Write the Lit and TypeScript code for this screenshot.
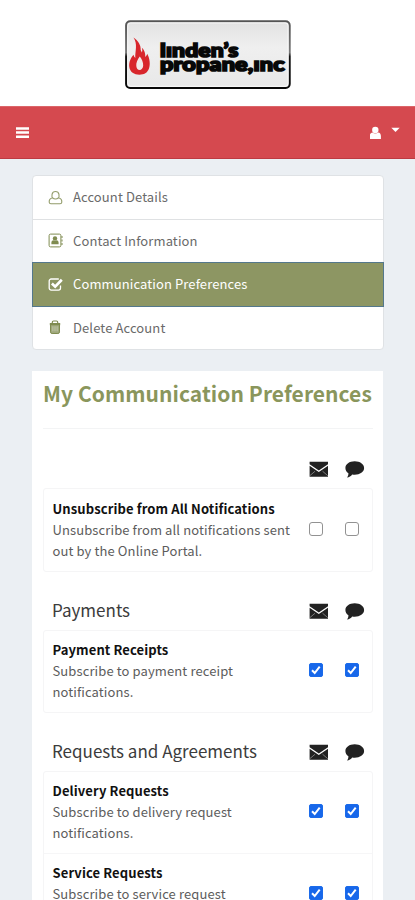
import { LitElement, html, svg, css, nothing } from "lit";
import { customElement, property } from "lit/decorators.js";
import { classMap } from "lit/directives/class-map.js";

const icons = {
  user: svg`<path d="M5 8.4C3.2 6.6 3.4 1.500 7.500 1.500S11.800 6.600 10 8.400M4.700 7.800C2.200 8.300 1 10.200 1.200 12.300c.1 1 .8 1.500 1.700 1.500h9.200c.9 0 1.600-.5 1.700-1.500.2-2.100-1-4-3.500-4.500-1.500 1.400-4.100 1.400-5.600 0z" fill="none" stroke="currentColor" stroke-opacity=".85" stroke-width="1.100"/>`,
  contact: svg`<rect x="1.100" y="1.100" width="11.800" height="12.800" rx="1.500" fill="none" stroke="currentColor" stroke-width="1"/><path d="M13.500 3h1v2h-1zM13.500 6.500h1v2h-1zM13.500 10h1v2h-1z" fill="currentColor"/><circle cx="7" cy="5.500" r="2.200" fill="currentColor"/><path d="M3.400 11.200V9.600c0-1.500.8-2.300 2-2.400.9.700 2.300.7 3.200 0 1.200.1 2 .9 2 2.400v1.600z" fill="currentColor"/>`,
  check: svg`<path d="M12.500 8.500v2.600a2 2 0 0 1-2 2H3.200a2 2 0 0 1-2-2V4a2 2 0 0 1 2-2h7.600" fill="none" stroke="currentColor" stroke-width="1.300"/><path d="M3.900 6.500 7.200 9.700l6.600-6.900" fill="none" stroke="currentColor" stroke-width="2.700"/>`,
  trash: svg`<path d="M4.300 3V2.200c0-.7.500-1.200 1.200-1.200h3c.7 0 1.200.5 1.200 1.200V3" fill="none" stroke="currentColor" stroke-width="1.200"/><path d="M1.800 3h10.400v2.200H1.800z" fill="currentColor"/><path d="M2.500 4.500h9v7.400a1.600 1.600 0 0 1-1.600 1.600H4.100a1.600 1.600 0 0 1-1.600-1.600z" fill="currentColor" fill-opacity=".75" stroke="currentColor"/><path d="M4.900 6.300v5M7 6.300v5M9.100 6.300v5" stroke="#fff" stroke-opacity=".45" stroke-width=".8"/>`,
};

@customElement("company-logo")
class CompanyLogo extends LitElement {
  static styles = css`
    :host { display: block; height: 70px; }
    .word { font-family: Lato, sans-serif; font-weight: 900; font-size: 19px; fill: #080808; stroke: #080808; stroke-width: 1.700px; }
  `;
  render() {
    return html`<svg width="168" height="70" viewBox="0 0 168 70" role="img">
      <defs>
        <linearGradient id="face" x1="0" y1="0" x2="0" y2="1"><stop offset="0" stop-color="#e2e2e2"/><stop offset=".4" stop-color="#efefef"/><stop offset="1" stop-color="#e8e8e8"/></linearGradient>
        <linearGradient id="rim" x1="0" y1="0" x2="0" y2="1"><stop offset="0" stop-color="#555"/><stop offset=".47" stop-color="#777"/><stop offset=".53" stop-color="#111"/><stop offset="1" stop-color="#080808"/></linearGradient>
      </defs>
      <rect x="2.100" y="1.300" width="163.600" height="66.600" rx="4" fill="url(#face)" stroke="url(#rim)" stroke-width="2"/>
      <rect x="3.700" y="2.900" width="160.400" height="63.400" rx="3" fill="none" stroke="#fff" stroke-opacity=".8"/>
      <path d="M9.500 17.500c4.500 3 7.500 7.500 7.200 12.500l1.200 2.500c.5-1.600.6-3.200-.1-4.800 3.200 2.800 3.700 6.600 3.400 9.300 1-.8 1.800-1.800 2-3.200 2.500 4.500 3.300 10.500 1.800 14.700-1.600 4.500-5 6.200-9.600 6.200-5.300 0-9.400-2.700-10.100-7.700-.6-5 1.500-9 4.200-12.300.4 1.500 1 2.500 1.800 3.200C11 31 14 24 9.500 17.500z" fill="#d8262c"/>
      <path d="M15.800 36.500c-2.300 3-3.900 6.500-3.500 9.600.3 2.500 1.500 3.900 3.300 3.900s3.400-1.500 3.600-4.200c.2-3.300-1.400-7-3.400-9.300z" fill="#f2eaea"/>
      <text class="word" x="36" y="36.600" textLength="78.500" lengthAdjust="spacingAndGlyphs">lınden’s</text>
      <text class="word" x="36" y="50.800" textLength="124.700" lengthAdjust="spacingAndGlyphs">propane,ınc</text>
    </svg>`;
  }
}

@customElement("channel-icons")
class ChannelIcons extends LitElement {
  static styles = css`
    :host { display: flex; gap: 16px; color: #222; }
    svg { display: block; }
  `;
  render() {
    return html`
      <svg width="20" height="18" viewBox="0 0 20 18"><path d="M.6 1.700h18.400v2.500l-9.200 6.400L.6 4.200z" fill="currentColor"/><path d="M.6 5.700l9.200 6.400L19 5.700v11.100H.6z" fill="currentColor"/><path d="M.8 15.700l5.300-4.500M18.800 15.700l-5.300-4.500" stroke="#fff" stroke-opacity=".5" stroke-width=".8"/></svg>
      <svg width="20" height="18" viewBox="0 0 20 18"><path d="M9.700 1.300c5.300 0 9.400 2.900 9.400 6.700s-4.100 6.700-9.400 6.700c-.9 0-1.700-.1-2.500-.2-1.300 1.700-2.900 2.900-5.300 3.100 1-1.200 1.600-2.700 1.500-4.400C1.400 12 .4 10 .4 8c0-3.800 4-6.700 9.300-6.700z" fill="currentColor"/></svg>`;
  }
}

@customElement("check-box")
class CheckBox extends LitElement {
  @property({ type: Boolean }) checked = false;
  static styles = css`
    .box { box-sizing: border-box; display: flex; width: 14px; height: 14px; border: 1px solid #929292; border-radius: 3px; background: #fff; }
    .on { border-color: #1b6bea; background: #1767ea; border-radius: 2px; }
    svg { display: block; }
  `;
  render() {
    return html`<div class=${classMap({ box: true, on: this.checked })}>
      ${this.checked ? html`<svg width="12" height="12" viewBox="0 0 12 12"><path d="M2 6.300l2.700 2.700 5-6.400" fill="none" stroke="#fff" stroke-width="2"/></svg>` : nothing}
    </div>`;
  }
}

type Pref = { name: string; text: string; on: boolean };
type Group = { title: string; prefs: Pref[] };

const groups: Group[] = [
  { title: "", prefs: [{ name: "Unsubscribe from All Notifications", text: "Unsubscribe from all notifications sent out by the Online Portal.", on: false }] },
  { title: "Payments", prefs: [{ name: "Payment Receipts", text: "Subscribe to payment receipt notifications.", on: true }] },
  {
    title: "Requests and Agreements",
    prefs: [
      { name: "Delivery Requests", text: "Subscribe to delivery request notifications.", on: true },
      { name: "Service Requests", text: "Subscribe to service request notifications.", on: true },
    ],
  },
];

const menu = [
  { icon: icons.user, label: "Account Details" },
  { icon: icons.contact, label: "Contact Information" },
  { icon: icons.check, label: "Communication Preferences", active: true },
  { icon: icons.trash, label: "Delete Account" },
];

@customElement("app-root")
class AppRoot extends LitElement {
  static styles = css`
    :host { display: block; height: 900px; overflow: hidden; background: #ebeff3; font-family: "Noto Sans CJK SC", sans-serif; color: #5c5c5c; font-size: 13px; letter-spacing: .11px; }
    * { box-sizing: border-box; }
    .brand { height: 106px; background: #fff; display: flex; justify-content: center; padding: 20px 0 0 1px; }
    .bar { height: 53px; background: #d5494f; border-top: 1px solid #dc6569; border-bottom: 1px solid #bd3a42; display: flex; align-items: center; justify-content: space-between; padding: 0 15px 0 16px; }
    .bar svg { display: block; }
    .account { display: flex; gap: 9px; }
    .menu { margin: 16px 31.500px 0 32px; border: 1px solid #dfe2e5; border-radius: 4px; background: #fff; }
    .item { display: flex; align-items: center; gap: 10px; height: 43.500px; padding-left: 15px; border-bottom: 1px solid #dfe1e3; color: #6a6a6a; }
    .item span { margin-top: -1px; }
    .item:last-child { border-bottom: 0; height: 42.500px; }
    .item svg { color: #7f8b50; flex: none; }
    .item.active { margin: -1px -1px 0; padding-left: 15px; height: 44.500px; background: #8d9663; border: 1px solid #54788c; color: #fff; }
    .item.active svg { color: #fff; }
    .card { margin: 21px 32px 0; background: #fff; height: 600px; padding: 0 10px 0 11px; }
    h1 { margin: 0; height: 58px; line-height: 44px; font-size: 21px; letter-spacing: .06px; font-weight: 700; color: #8a965c; white-space: nowrap; border-bottom: 1px solid #f3f4f5; }
    .head { display: flex; justify-content: space-between; align-items: center; height: 58px; padding: 20px 8px 0 9px; }
    .first { height: 59px; padding-top: 21px; }
    h2 { margin: -2px 0 0; font-size: 17px; letter-spacing: 0; line-height: 30px; font-weight: 400; color: #3c3c3c; white-space: nowrap; }
    .group { border: 1px solid #f5f5f6; border-radius: 3px; }
    .pref { display: flex; align-items: center; height: 81.500px; padding: 0 13px 1px 8.500px; border-bottom: 1px solid #f6f6f7; }
    .pref:last-child { border-bottom: 0; }
    .copy { flex: none; width: 256.500px; line-height: 21px; padding-right: 14px; }
    .name { font-weight: 700; color: #111; white-space: nowrap; }
    .checks { display: flex; gap: 22px; margin-top: -1px; }
  `;
  render() {
    return html`
      <div class="brand"><company-logo></company-logo></div>
      <div class="bar">
        <svg width="13" height="13" viewBox="0 0 13 13"><path d="M0 1.200h13v2.500H0zM0 5.300h13v2.500H0zM0 9.500h13v2.500H0z" fill="#fff"/></svg>
        <div class="account">
          <svg width="12" height="14" viewBox="0 0 12 14"><circle cx="5.300" cy="4" r="3.200" fill="#fff"/><path d="M-.2 13V10c0-2.200 1-3.400 2.700-3.600 1.600 1.400 4 1.400 5.600 0 1.800.2 2.800 1.400 2.800 3.600v3z" fill="#fff"/></svg>
          <svg width="9" height="14" viewBox="0 0 9 14"><path d="M.3 1.700h8.400L4.500 6z" fill="#fff"/></svg>
        </div>
      </div>
      <div class="menu">
        ${menu.map((m) => html`<div class=${classMap({ item: true, active: !!m.active })}><svg width="15" height="15" viewBox="0 0 15 15">${m.icon}</svg><span>${m.label}</span></div>`)}
      </div>
      <div class="card">
        <h1>My Communication Preferences</h1>
        ${groups.map((g) => html`
          <div class=${classMap({ head: true, first: !g.title })}><h2>${g.title}</h2><channel-icons></channel-icons></div>
          <div class="group">
            ${g.prefs.map((p) => html`<div class="pref">
              <div class="copy"><div class="name">${p.name}</div><div>${p.text}</div></div>
              <div class="checks"><check-box ?checked=${p.on}></check-box><check-box ?checked=${p.on}></check-box></div>
            </div>`)}
          </div>`)}
      </div>`;
  }
}
